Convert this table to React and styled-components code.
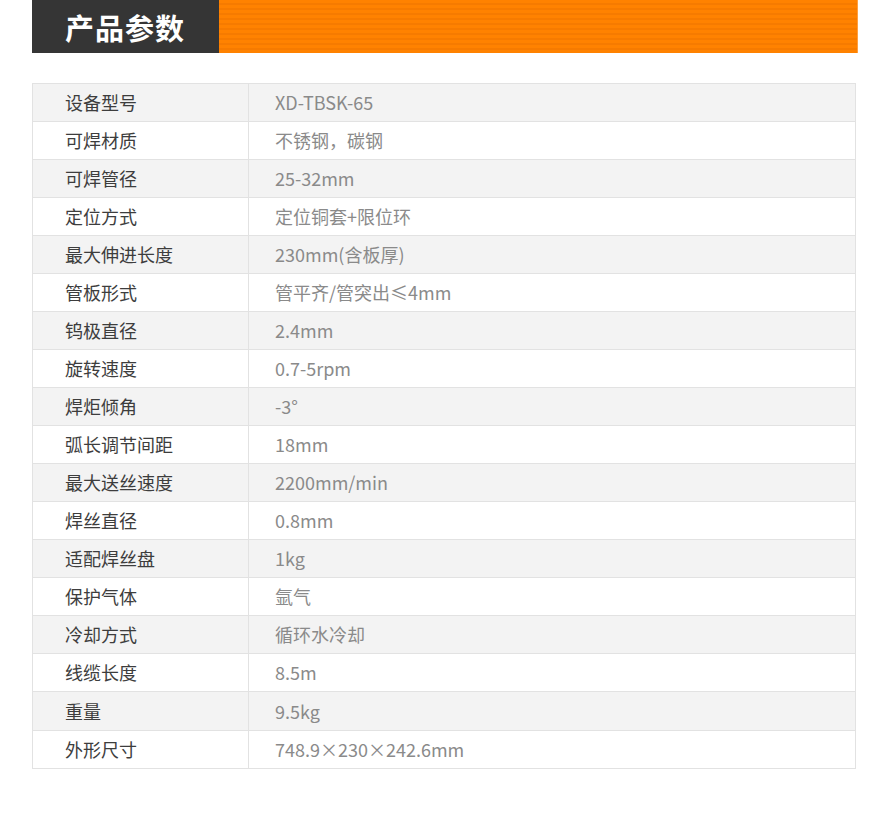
import React from "react";
import styled, { createGlobalStyle } from "styled-components";

const GlobalStyle = createGlobalStyle`
  body {
    margin: 0;
    background: #fff;
    font-family: "Noto Sans CJK SC", "Noto Sans", sans-serif;
  }
`;

const Page = styled.div`
  width: 890px;
  height: 816px;
  padding: 0 32px;
  box-sizing: border-box;
`;

const Banner = styled.div`
  display: flex;
  height: 53px;
  width: 826px;
`;

const BannerTitle = styled.div`
  width: 187px;
  background: #353535;
  color: #fff;
  font-size: 29px;
  font-weight: 700;
  letter-spacing: 1px;
  display: flex;
  align-items: center;
  padding-left: 33px;
  box-sizing: border-box;
`;

const BannerStripe = styled.div`
  flex: 1;
  background: repeating-linear-gradient(
    to bottom,
    #ff8200 0px,
    #ff8200 3px,
    #f67b00 3px,
    #f67b00 5px
  );
  border-right: 1px solid #ffa040;
`;

const Table = styled.div`
  margin-top: 30px;
  width: 822px;
  border: 1px solid #e2e2e2;
  border-bottom: none;
`;

const Row = styled.div`
  display: grid;
  grid-template-columns: 216px 1fr;
  height: ${(p) => (p.$tall ? 39 : 38)}px;
  border-bottom: 1px solid #e2e2e2;
  box-sizing: border-box;
  background: ${(p) => (p.$shade ? "#f3f3f3" : "#fff")};
  font-size: 18px;
  line-height: 1;
`;

const Label = styled.div`
  display: flex;
  align-items: center;
  padding-left: 32px;
  padding-bottom: 1px;
  color: #3d3d3d;
  border-right: 1px solid #e2e2e2;
`;

const Value = styled.div`
  display: flex;
  align-items: center;
  padding-left: 26px;
  padding-bottom: 1px;
  color: #8a8a8a;
`;

const specs = [
  ["设备型号", "XD-TBSK-65"],
  ["可焊材质", "不锈钢，碳钢"],
  ["可焊管径", "25-32mm"],
  ["定位方式", "定位铜套+限位环"],
  ["最大伸进长度", "230mm(含板厚)"],
  ["管板形式", "管平齐/管突出≤4mm"],
  ["钨极直径", "2.4mm"],
  ["旋转速度", "0.7-5rpm"],
  ["焊炬倾角", "-3°"],
  ["弧长调节间距", "18mm"],
  ["最大送丝速度", "2200mm/min"],
  ["焊丝直径", "0.8mm"],
  ["适配焊丝盘", "1kg"],
  ["保护气体", "氩气"],
  ["冷却方式", "循环水冷却"],
  ["线缆长度", "8.5m"],
  ["重量", "9.5kg"],
  ["外形尺寸", "748.9×230×242.6mm"],
];

export default function App() {
  return (
    <Page>
      <GlobalStyle />
      <Banner>
        <BannerTitle>产品参数</BannerTitle>
        <BannerStripe />
      </Banner>
      <Table>
        {specs.map(([k, v], i) => (
          <Row key={k} $shade={i % 2 === 0} $tall={i === 16}>
            <Label>{k}</Label>
            <Value>{v}</Value>
          </Row>
        ))}
      </Table>
    </Page>
  );
}
